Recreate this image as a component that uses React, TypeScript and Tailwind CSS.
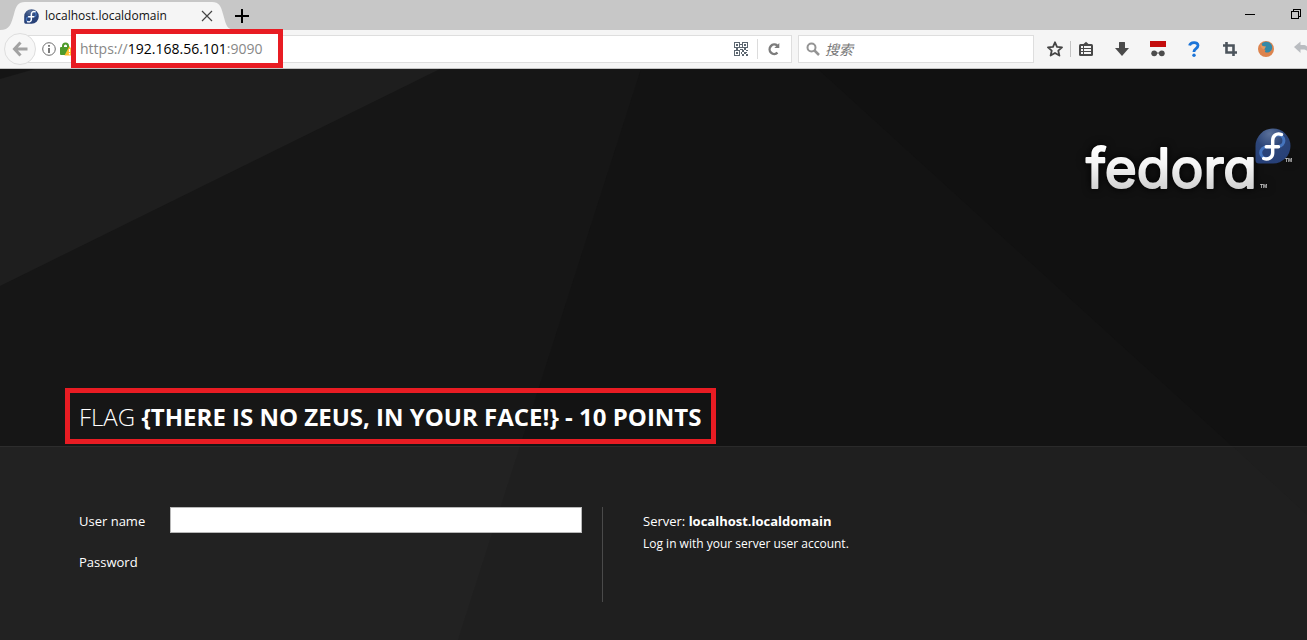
import React from "react";

function FedoraMark({ className = "", id }: { className?: string; id: string }) {
  return (
    <svg viewBox="0 0 36 36" className={className} aria-hidden="true">
      <defs>
        <radialGradient id={id} cx="0.4" cy="0.15" r="0.9">
          <stop offset="0" stopColor="#5a7099" />
          <stop offset="0.45" stopColor="#2d4679" />
          <stop offset="1" stopColor="#263f77" />
        </radialGradient>
      </defs>
      <path d="M18 0.500A17.500 17.500 0 0 1 18 35.500H4A3.500 3.500 0 0 1 .5 32V18A17.500 17.500 0 0 1 18 .5Z" fill={`url(#${id})`} />
      <path
        d="M18 19H11.500A5.800 5.800 0 1 0 17.300 25V12.500A5.800 5.800 0 1 1 23.500 18.500H18"
        fill="none"
        stroke="#4574bd"
        strokeWidth="3"
      />
      <path
        d="M26.500 6.500C21 4.500 17.700 8 17.700 12.500V25C17.700 29.500 13.500 32 8.700 30.500M11.200 18.700H23.500"
        fill="none"
        stroke="#fff"
        strokeWidth="3.4"
        strokeLinecap="round"
      />
    </svg>
  );
}

function FedoraLogo() {
  return (
    <div className="relative mt-[52px] mr-[10px] h-20 w-[214px]" role="img" aria-label="fedora">
      <svg viewBox="0 0 214 80" className="h-20 w-[214px] drop-shadow-[0_0_4px_#000]">
        <defs>
          <linearGradient id="word" gradientUnits="userSpaceOnUse" x1="0" y1="26" x2="0" y2="70">
            <stop offset="0" stopColor="#ffffff" />
            <stop offset="0.4" stopColor="#f4f4f4" />
            <stop offset="1" stopColor="#cfcfcf" />
          </linearGradient>
        </defs>
        <text
          x="3"
          y="67"
          fill="url(#word)"
          stroke="url(#word)"
          strokeWidth="2"
          strokeLinejoin="round"
          className="font-['Inter','DejaVu_Sans',sans-serif] text-[55px] font-normal [font-feature-settings:'cv11']"
        >
          fedora
        </text>
        <text x="177" y="67" fill="#ccc" className="font-['Liberation_Sans',sans-serif] text-[5px] font-bold">TM</text>
        <text x="202" y="41" fill="#ccc" className="font-['Liberation_Sans',sans-serif] text-[5px] font-bold">TM</text>
      </svg>
      <FedoraMark id="mark-large" className="absolute top-[7px] left-[172px] size-[36px]" />
    </div>
  );
}

function Backdrop() {
  return (
    <svg className="absolute inset-0 h-full w-full" viewBox="0 0 1307 571" preserveAspectRatio="none" aria-hidden="true">
      <rect width="1307" height="571" fill="#131313" />
      <path d="M0 0H641L458 571H0Z" fill="#161616" />
      <path d="M0 0H440L0 217Z" fill="#1e1e1e" />
      <path d="M0 0H35L0 10Z" fill="#151515" />
      <path d="M818 0L1232 377L1307 446V0Z" fill="#111111" />
    </svg>
  );
}

function TabStrip() {
  return (
    <div className="flex h-[30px] items-stretch bg-[#c7c7c7]">
      <div className="relative flex w-[232px] items-center">
        <svg className="absolute inset-0 h-[30px] w-[232px]" viewBox="0 0 232 30" aria-hidden="true">
          <path d="M0 30C10 30 11 24 14 14C16 6 18 2 25 2H212C219 2 221 6 223 14C226 24 226 30 236 30Z" fill="#f5f5f5" />
        </svg>
        <div className="relative flex flex-1 items-center pt-[2px] pl-6">
          <FedoraMark id="mark-small" className="size-[15px]" />
          <span className="ml-[6px] flex-1 text-[12px] leading-4 text-[#111]">localhost.localdomain</span>
          <button aria-label="Close tab" className="mr-[19px] text-[#444]">
            <svg viewBox="0 0 12 12" className="size-3">
              <path d="M1 1L11 11M11 1L1 11" stroke="currentColor" strokeWidth="1.2" />
            </svg>
          </button>
        </div>
      </div>
      <button aria-label="New tab" className="ml-[3px] pt-[2px]">
        <svg viewBox="0 0 14 14" className="size-[14px]">
          <path d="M7 0V14M0 7H14" stroke="#000" strokeWidth="2" />
        </svg>
      </button>
      <div className="ml-auto flex items-center gap-[36px] pb-[2px]">
        <button aria-label="Minimize">
          <svg viewBox="0 0 10 10" className="size-[10px]" shapeRendering="crispEdges">
            <path d="M0 5H10" stroke="#000" />
          </svg>
        </button>
        <button aria-label="Restore" className="mr-[6px]">
          <svg viewBox="0 0 10 10" className="size-[10px]" fill="none" stroke="#000" shapeRendering="crispEdges">
            <path d="M.5 2.500H7.500V9.500H.5ZM2.500 2.500V.5H9.500V7.500H7.500" />
          </svg>
        </button>
      </div>
    </div>
  );
}

function QrIcon() {
  return (
    <svg viewBox="0 0 14 14" className="size-[14px]" fill="#5c6670" shapeRendering="crispEdges">
      <path fillRule="evenodd" d="M0 0h6v6H0zM1 1v4h4V1zM8 0h6v6H8zM9 1v4h4V1zM0 8h6v6H0zM1 9v4h4V9z" />
      <path d="M2 2h2v2H2zM10 2h2v2h-2zM2 10h2v2H2zM6 2h2v1H6zM6 5h2v1H6zM2 6h2v2H2zM6 7h3v1H6zM10 6h2v2h-2zM8 8h2v2H8zM12 8h2v1h-2zM10 10h2v2h-2zM7 10h1v2H7zM12 12h2v2h-2zM8 12h2v2H8zM12 10h1v1h-1z" />
    </svg>
  );
}

function ToolbarIcons() {
  return (
    <div className="flex items-center">
      <button aria-label="Bookmark" className="ml-[13px]">
        <svg viewBox="0 0 16 16" className="size-4" fill="none" stroke="#444" strokeWidth="1.8" strokeLinejoin="round">
          <path d="M8 1.300L10 5.900L15 6.400L11.300 9.700L12.400 14.600L8 12L3.600 14.600L4.700 9.700L1 6.400L6 5.900Z" />
        </svg>
      </button>
      <span className="ml-[7px] h-4 w-px bg-[#c4c4c4]" />
      <button aria-label="Bookmarks list" className="ml-[7px]">
        <svg viewBox="0 0 16 16" className="size-4" fill="#484848">
          <path d="M5 3.500L8 .8L11 3.500Z" />
          <rect x="1" y="3" width="14" height="12" rx="1.500" />
          <path d="M3 5H5V7H3ZM6 5H13V7H6ZM3 8H5V10H3ZM6 8H13V10H6ZM3 11H5V13H3ZM6 11H13V13H6Z" fill="#f5f5f5" />
        </svg>
      </button>
      <button aria-label="Downloads" className="ml-5">
        <svg viewBox="0 0 16 16" className="size-4" fill="#4a4a4a">
          <path d="M5 1.500Q5 1 5.500 1H10.500Q11 1 11 1.500V7H15L8 15L1 7H5Z" />
        </svg>
      </button>
      <button aria-label="Proxy" className="ml-5">
        <svg viewBox="0 0 16 16" className="size-4">
          <path d="M0 0H16V6H0Z" fill="#c40d0d" />
          <path d="M3 12H13" stroke="#555" />
          <circle cx="4.200" cy="12.300" r="2.900" fill="#4c4c4c" />
          <circle cx="11.800" cy="12.300" r="2.900" fill="#4c4c4c" />
        </svg>
      </button>
      <button aria-label="Help" className="ml-5">
        <svg viewBox="0 0 16 16" className="size-4" fill="none" stroke="#1b74d8">
          <path d="M3.600 4.600C4.200 1 12 .2 12 4.600C12 7.600 8 7.500 8 10.500V11" strokeWidth="2.800" />
          <circle cx="8" cy="14.300" r="1.700" fill="#1b74d8" stroke="none" />
        </svg>
      </button>
      <button aria-label="Screenshot" className="ml-5">
        <svg viewBox="0 0 16 16" className="size-4" fill="none" stroke="#4c545c" strokeWidth="2.600">
          <path d="M4.500 1V11.500H15M1 4.500H11.500V15" />
        </svg>
      </button>
      <button aria-label="Firefox" className="ml-5">
        <svg viewBox="0 0 16 16" className="size-4">
          <circle cx="8" cy="8" r="8" fill="#dd844e" />
          <path d="M4 2.500C7-.5 13 .5 14 5C15 10 10.500 12 8 11.500C6.500 11 6.500 9.500 8 9C5.500 8.500 5 7 5.500 6C4.500 5 3.500 4 4 2.500Z" fill="#3489a8" />
          <path d="M2 3L4.500 5L8 5.500L6.200 8.500C4 8 2.500 6 2 3Z" fill="#e4995f" />
        </svg>
      </button>
      <button aria-label="Undo" className="ml-5 w-[13px] overflow-hidden">
        <svg viewBox="0 0 16 16" className="size-4" fill="#b9bcc0">
          <path d="M0 6L6.500 .5V4H9C13 4 15.500 7 15.500 13C14 10 12 8.500 9 8.500H6.500V12Z" />
        </svg>
      </button>
    </div>
  );
}

function NavBar() {
  return (
    <div className="flex h-[39px] items-center border-b border-[#c3c3c3] bg-[#f5f5f5]">
      <button aria-label="Back" className="z-10 ml-1 flex size-8 shrink-0 items-center justify-center rounded-full border border-[#dedede] bg-[#f7f7f7]">
        <svg viewBox="0 0 16 16" className="size-4" fill="none" stroke="#a2a2a2" strokeWidth="3">
          <path d="M8.500 1.500L2.500 8L8.500 14.500M3 8H15.500" />
        </svg>
      </button>
      <div className="-ml-2 flex h-7 flex-1 items-center border border-[#dedede] bg-white pl-[13px]">
        <button aria-label="Site information">
          <svg viewBox="0 0 14 14" className="size-[14px]" fill="none" stroke="#6c6c6c">
            <circle cx="7" cy="7" r="6.300" />
            <path d="M7 6V11M7 3V4.800" strokeWidth="1.800" />
          </svg>
        </button>
        <svg viewBox="0 0 14 14" className="ml-[4px] size-[14px]" aria-hidden="true">
          <path d="M3 6V4A2.500 2.500 0 0 1 8 4V6" fill="none" stroke="#4d9a2a" strokeWidth="2" />
          <rect x="0" y="5" width="10" height="8" rx="1" fill="#4d9a2a" />
          <path d="M9.500 4L15 13.500H4.500Z" fill="#fdbf2d" />
          <path d="M9.500 7V10M9.500 11V12.500" stroke="#fff" strokeWidth="1.200" />
        </svg>
        <div className="relative ml-[6px] flex-1">
          <span className="pointer-events-none absolute -top-[10px] -left-[9px] h-[39px] w-[212px] border-[5px] border-[#e81c23] bg-white" />
          <div
            role="textbox"
            aria-label="Address"
            contentEditable
            suppressContentEditableWarning
            className="relative text-[14px] leading-5 text-[#888] outline-none"
          >
            https://<span className="text-black">192.168.56.101</span>:9090
          </div>
        </div>
        <button aria-label="QR code"><QrIcon /></button>
        <span className="ml-[9px] h-5 w-px bg-[#dcdcdc]" />
        <button aria-label="Reload" className="mr-[10px] ml-[9px]">
          <svg viewBox="0 0 14 14" className="size-[14px]" fill="none" stroke="#7c7c7c" strokeWidth="2.400">
            <path d="M10.500 10.700A4.700 4.700 0 1 1 10.300 3.600" />
            <path d="M12.300 1V6H7.300Z" fill="#7c7c7c" stroke="none" />
          </svg>
        </button>
      </div>
      <label className="ml-[6px] flex h-7 w-[236px] items-center border border-[#dedede] bg-white pl-[7px]">
        <svg viewBox="0 0 14 14" className="size-[14px] shrink-0" fill="none" stroke="#949494" aria-hidden="true">
          <circle cx="5.500" cy="5.500" r="4" strokeWidth="2" />
          <path d="M8.500 8.500L13 13" strokeWidth="2.500" />
        </svg>
        <input
          type="search"
          aria-label="搜索"
          placeholder="搜索"
          className="ml-[5px] w-full min-w-0 bg-transparent font-['Noto_Sans_CJK_SC',sans-serif] text-[14px] italic outline-none placeholder:text-[#777]"
        />
      </label>
      <ToolbarIcons />
    </div>
  );
}

function LoginPanel() {
  return (
    <section className="flex flex-1 flex-col border-t border-white/5 bg-white/[0.055] pt-[60px] pl-[79px]">
      <div className="flex h-[95px] text-[13px] leading-5 text-white">
        <form className="grid w-[524px] grid-cols-[91px_412px] content-start gap-y-[15px] border-r border-[#4a4a4a]">
          <label htmlFor="user" className="pt-1">User name</label>
          <input id="user" type="text" className="h-[26px] border border-[#b8b8b8] bg-white px-2 text-black outline-none" />
          <span className="pt-1">Password</span>
        </form>
        <div className="pt-1 pl-10">
          <p>Server: <strong className="font-bold">localhost.localdomain</strong></p>
          <p className="mt-[3px] text-[12px]">Log in with your server user account.</p>
        </div>
      </div>
    </section>
  );
}

export default function App() {
  return (
    <div className="flex min-h-screen flex-col overflow-hidden font-['Open_Sans','Noto_Sans_CJK_SC',sans-serif]">
      <header>
        <TabStrip />
        <NavBar />
      </header>
      <main className="relative flex flex-1 flex-col bg-[#131313]">
        <Backdrop />
        <div className="relative flex flex-1 flex-col">
          <div className="flex min-h-[377px] flex-col">
            <div className="flex justify-end"><FedoraLogo /></div>
            <h1 className="mt-auto mb-[2px] ml-[65px] w-[651px] border-[5px] border-[#e81c23] px-[9px] pt-2 pb-[6px] text-[24px] leading-8 font-light whitespace-nowrap text-white">
              FLAG <strong className="font-bold">{"{THERE IS NO ZEUS, IN YOUR FACE!} - 10 POINTS"}</strong>
            </h1>
          </div>
          <LoginPanel />
        </div>
      </main>
    </div>
  );
}
